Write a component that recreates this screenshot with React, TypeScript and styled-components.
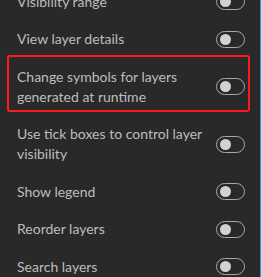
import React from "react";
import styled, { createGlobalStyle } from "styled-components";

const Global = createGlobalStyle`
  html, body { margin: 0; padding: 0; background: #292929; overflow: hidden; }
  body { font-family: Lato, "Open Sans", sans-serif; }
`;

const Panel = styled.div`
  width: 261px;
  height: 277px;
  box-sizing: border-box;
  background: #292929;
  border-right: 1px solid #1aa3e8;
  overflow: hidden;
`;

const List = styled.div`
  display: flex;
  flex-direction: column;
  gap: 17.5px;
  margin-top: -8.5px;
  padding: 0 15px 0 17px;
`;

const Row = styled.div`
  display: flex;
  align-items: center;
  justify-content: space-between;
  gap: 14px;
`;

const Label = styled.span`
  flex: 1;
  font-size: 14px;
  line-height: 20px;
  color: #bdbdbd;
`;

const Highlight = styled.div`
  margin: -12px -5px -5px -10px;
  padding: 10px 3px 3px 8px;
  border: 2px solid #ff1a1a;
  border-radius: 3px;
`;

const Track = styled.span`
  flex: none;
  box-sizing: border-box;
  width: 29px;
  height: 17px;
  border: 1px solid #a9a9a9;
  border-radius: 9px;
  display: flex;
  align-items: center;
  padding-left: 3px;
`;

const Knob = styled.span`
  width: 11px;
  height: 11px;
  border-radius: 50%;
  background: #d2d2d2;
`;

const Toggle = () => (
  <Track>
    <Knob />
  </Track>
);

const items = [
  "Visibility range",
  "View layer details",
  "Change symbols for layers generated at runtime",
  "Use tick boxes to control layer visibility",
  "Show legend",
  "Reorder layers",
  "Search layers",
];

export default function App() {
  return (
    <>
      <Global />
      <Panel>
        <List>
          {items.map((t, i) =>
            i === 2 ? (
              <Highlight key={t}>
                <Row>
                  <Label>{t}</Label>
                  <Toggle />
                </Row>
              </Highlight>
            ) : (
              <Row key={t}>
                <Label>{t}</Label>
                <Toggle />
              </Row>
            )
          )}
        </List>
      </Panel>
    </>
  );
}
